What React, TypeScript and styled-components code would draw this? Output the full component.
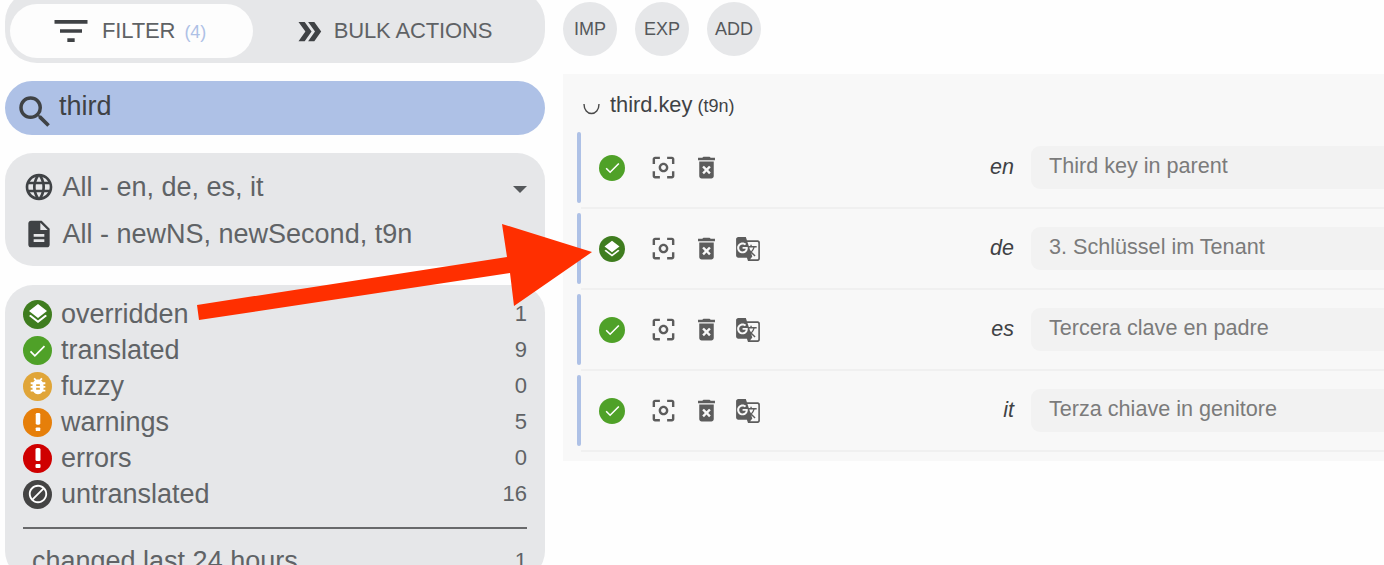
import React from "react";
import styled, { createGlobalStyle } from "styled-components";
import {
  MdFilterList,
  MdDoubleArrow,
  MdSearch,
  MdLanguage,
  MdDescription,
  MdCenterFocusWeak,
  MdDeleteForever,
  MdGTranslate,
  MdLayers,
  MdBugReport,
  MdBlock,
} from "react-icons/md";

const Global = createGlobalStyle`
  html, body { margin: 0; padding: 0; background: #fefefe; overflow: hidden; height: 565px; }
  body { font-family: "Liberation Sans", Arial, sans-serif; color: #5a5a5a; }
`;

const Page = styled.div`
  position: relative;
  width: 1384px;
  height: 565px;
  overflow: hidden;
  display: flex;
  gap: 18px;
  padding-left: 5px;
  box-sizing: border-box;
`;

const Sidebar = styled.aside`
  width: 540px;
  flex: none;
  display: flex;
  flex-direction: column;
  gap: 18px;
  margin-top: -10px;
`;

const TabBar = styled.div`
  height: 73px;
  flex: none;
  box-sizing: border-box;
  background: #e6e7e9;
  border-radius: 32px;
  padding: 14px 5px 5px;
  display: flex;
`;

const Tab = styled.div<{ $active?: boolean }>`
  width: ${(p) => (p.$active ? 243 : 287)}px;
  flex: none;
  height: 54px;
  padding-right: 8px;
  box-sizing: border-box;
  border-radius: 27px;
  background: ${(p) => (p.$active ? "#fdfdfd" : "transparent")};
  display: flex;
  align-items: center;
  justify-content: center;
  gap: ${(p) => (p.$active ? 9 : 8)}px;
  font-size: 22px;
  color: #5f6265;
  letter-spacing: -0.12px;
  svg { color: #3f4245; flex: none; }
`;

const TabCount = styled.span`
  color: #aec1e6;
  font-size: 18px;
  margin-left: 9px;
`;

const SearchBox = styled.div`
  height: 54px;
  flex: none;
  border-radius: 27px;
  background: #aec1e6;
  display: flex;
  align-items: center;
  padding: 0 0 3px 9px;
  gap: 3px;
  font-size: 27px;
  color: #3f4245;
  box-sizing: border-box;
  svg { flex: none; margin-top: 10px; }
`;

const Panel = styled.section`
  background: #e6e7e9;
  border-radius: 28px;
  box-sizing: border-box;
`;

const SelectPanel = styled(Panel)`
  height: 113px;
  flex: none;
  padding: 17px 18px 0 18px;
  display: flex;
  flex-direction: column;
  gap: 13px;
`;

const SelectRow = styled.div`
  display: flex;
  align-items: center;
  height: 34px;
  gap: 7.5px;
  font-size: 27px;
  color: #606366;
  svg { color: #3f4245; flex: none; }
`;

const Caret = styled.div`
  margin-left: auto;
  width: 0;
  height: 0;
  border-left: 7px solid transparent;
  border-right: 7px solid transparent;
  border-top: 7px solid #55585b;
  margin-top: 4px;
`;

const StatsPanel = styled(Panel)`
  flex: 1;
  margin-top: 1px;
  padding: 11px 18px 0;
`;

const StatRow = styled.div`
  display: flex;
  align-items: center;
  height: 36px;
  gap: 9px;
  font-size: 27px;
  color: #606366;
`;

const Count = styled.span`
  margin-left: auto;
  font-size: 22px;
`;

const Badge = styled.span<{ $bg: string }>`
  width: 29px;
  height: 29px;
  border-radius: 50%;
  background: ${(p) => p.$bg};
  flex: none;
  display: flex;
  align-items: center;
  justify-content: center;
  color: #fff;
`;

const Rule = styled.hr`
  border: 0;
  height: 2px;
  background: #68696b;
  margin: 15px 0 14px;
`;

const ExtraRow = styled(StatRow)`
  padding-left: 9px;
`;

const Main = styled.main`
  flex: 1;
  min-width: 0;
  display: flex;
  flex-direction: column;
  padding-top: 2px;
  gap: 18px;
`;

const ActionBar = styled.div`
  display: flex;
  gap: 18px;
`;

const RoundButton = styled.div`
  width: 54px;
  height: 54px;
  border-radius: 50%;
  background: #e6e7e9;
  display: flex;
  align-items: center;
  justify-content: center;
  font-size: 18px;
  color: #55585b;
`;

const KeyCard = styled.section`
  height: 387px;
  background: #f8f8f8;
  padding: 18px 0 0 14px;
  box-sizing: border-box;
`;

const KeyTitle = styled.div`
  display: flex;
  align-items: baseline;
  height: 36px;
  font-size: 21.8px;
  color: #3f4245;
  padding-left: 6px;
  gap: 5px;
`;

const KeyIcon = styled.svg`
  margin: 11px 5px 0 0;
  flex: none;
  align-self: flex-start;
`;

const KeyNs = styled.span`
  font-size: 18px;
`;

const Row = styled.div`
  height: 81px;
  display: flex;
`;

const RowBar = styled.div`
  width: 4px;
  flex: none;
  margin: 4px 0 6px;
  border-radius: 2px;
  background: #aec1e6;
`;

const RowBody = styled.div`
  flex: 1;
  min-width: 0;
  box-sizing: border-box;
  border-bottom: 2px solid #f0f0f0;
  display: flex;
  align-items: center;
  padding-left: 18px;
`;

const RowIcons = styled.div`
  display: flex;
  align-items: center;
  flex: none;
  width: 384px;
  gap: 14px;
  svg { color: #5c5c5c; flex: none; }
`;

const StatusDot = styled.span<{ $bg: string }>`
  width: 26px;
  height: 26px;
  flex: none;
  border-radius: 50%;
  background: ${(p) => p.$bg};
  display: flex;
  align-items: center;
  justify-content: center;
  margin-right: 10px;
  svg { color: #fff; }
`;

const Lang = styled.div`
  width: 31px;
  flex: none;
  text-align: right;
  font-style: italic;
  font-size: 21.5px;
  color: #3f4245;
  margin-right: 17px;
`;

const Value = styled.div`
  flex: 1;
  height: 43px;
  background: #f2f2f2;
  border-radius: 9px 0 0 9px;
  padding: 0 0 3px 18px;
  box-sizing: border-box;
  display: flex;
  align-items: center;
  font-size: 21.6px;
  color: #7b7b7b;
`;

const ArrowOverlay = styled.svg`
  position: absolute;
  left: 0;
  top: 0;
  pointer-events: none;
`;

const Check = ({ s = 21 }: { s?: number }) => (
  <svg width={s} height={s} viewBox="0 0 24 24" fill="none" stroke="#fff" strokeWidth="2"><path d="M4 13l5 5L20 7" /></svg>
);
const Bang = ({ h }: { h: number }) => (
  <svg width="8" height={h} viewBox="0 0 8 22" fill="#fff"><rect x="1.500" y="1" width="5" height="13" rx="1.500" /><rect x="1.500" y="17" width="5" height="4" rx="1" /></svg>
);

const stats = [
  { label: "overridden", count: 1, bg: "#3f7d1f", icon: <MdLayers size={24} /> },
  { label: "translated", count: 9, bg: "#4fa128", icon: <Check /> },
  { label: "fuzzy", count: 0, bg: "#e0a538", icon: <MdBugReport size={22} /> },
  { label: "warnings", count: 5, bg: "#e67f0a", icon: <Bang h={20} /> },
  { label: "errors", count: 0, bg: "#cf0000", icon: <Bang h={22} /> },
  { label: "untranslated", count: 16, bg: "#444444", icon: <MdBlock size={22} /> },
];

const rows = [
  { lang: "en", value: "Third key in parent", over: false, translate: false },
  { lang: "de", value: "3. Schlüssel im Tenant", over: true, translate: true },
  { lang: "es", value: "Tercera clave en padre", over: false, translate: true },
  { lang: "it", value: "Terza chiave in genitore", over: false, translate: true },
];

export default function App() {
  return (
    <Page>
      <Global />
      <Sidebar>
        <TabBar>
          <Tab $active>
            <MdFilterList size={44} />
            <span>FILTER<TabCount>(4)</TabCount></span>
          </Tab>
          <Tab>
            <MdDoubleArrow size={33} />
            <span>BULK ACTIONS</span>
          </Tab>
        </TabBar>
        <SearchBox>
          <MdSearch size={42} />
          third
        </SearchBox>
        <SelectPanel>
          <SelectRow><MdLanguage size={32} />All - en, de, es, it<Caret /></SelectRow>
          <SelectRow><MdDescription size={32} />All - newNS, newSecond, t9n</SelectRow>
        </SelectPanel>
        <StatsPanel>
          {stats.map((s) => (
            <StatRow key={s.label}>
              <Badge $bg={s.bg}>{s.icon}</Badge>
              {s.label}
              <Count>{s.count}</Count>
            </StatRow>
          ))}
          <Rule />
          <ExtraRow>changed last 24 hours<Count>1</Count></ExtraRow>
        </StatsPanel>
      </Sidebar>
      <Main>
        <ActionBar>
          <RoundButton>IMP</RoundButton>
          <RoundButton>EXP</RoundButton>
          <RoundButton>ADD</RoundButton>
        </ActionBar>
        <KeyCard>
          <KeyTitle>
            <KeyIcon width="17" height="12" viewBox="0 0 17 12" fill="none" stroke="#4a4a4a" strokeWidth="1.4"><path d="M1 1C1 7 4.500 10.500 8.500 10.500S16 7 16 1" /></KeyIcon>
            third.key <KeyNs>(t9n)</KeyNs>
          </KeyTitle>
          {rows.map((r) => (
            <Row key={r.lang}>
              <RowBar />
              <RowBody>
                <RowIcons>
                  <StatusDot $bg={r.over ? "#3f7d1f" : "#4fa128"}>
                    {r.over ? <MdLayers size={20} /> : <Check s={19} />}
                  </StatusDot>
                  <MdCenterFocusWeak size={29} />
                  <MdDeleteForever size={29} />
                  {r.translate && <MdGTranslate size={26} />}
                </RowIcons>
                <Lang>{r.lang}</Lang>
                <Value>{r.value}</Value>
              </RowBody>
            </Row>
          ))}
        </KeyCard>
      </Main>
      <ArrowOverlay width="1384" height="565" viewBox="0 0 1384 565">
        <polygon fill="#ff2f00" points="197,305 507,257 502,224 592,252 514,306 510,273 199,320" />
      </ArrowOverlay>
    </Page>
  );
}
